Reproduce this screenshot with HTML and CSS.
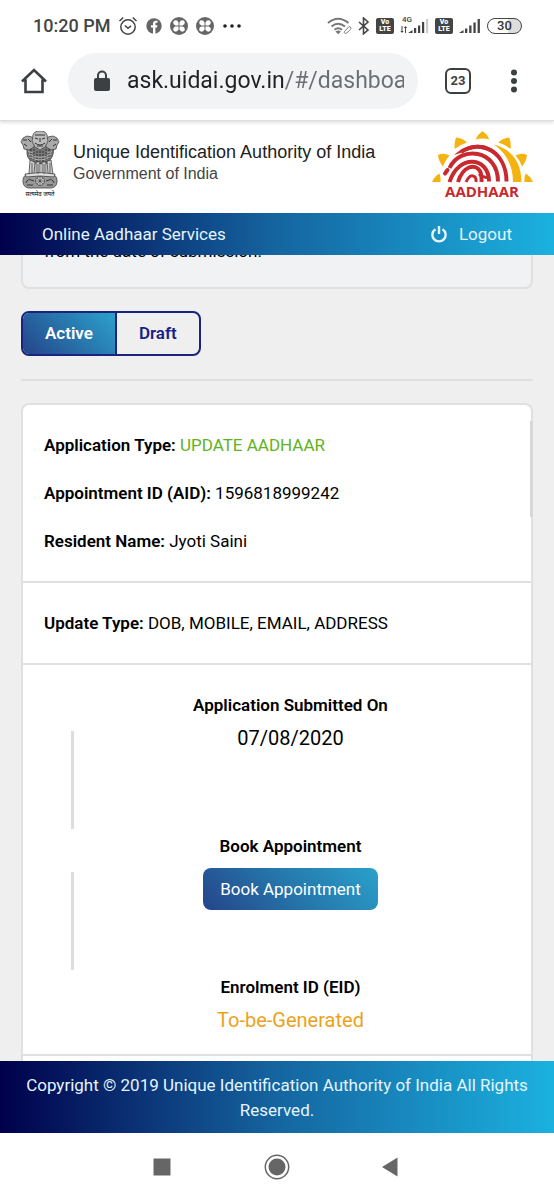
FILE: index.html
```
<!DOCTYPE html>
<html lang="en">
  <head>
    <meta charset="UTF-8" />
    <meta name="viewport" content="width=device-width, initial-scale=1.0" />
    <title>Online Aadhaar Services</title>
    <link rel="stylesheet" href="styles.css">
  </head>
  <body>
    <div class="status">
      <span class="clock">10:20 PM</span>
      <svg width="20" height="20" viewBox="0 0 20 20" fill="none" stroke="#444" stroke-width="1.5">
        <circle cx="10" cy="11" r="7.2" />
        <path d="M6.8 9.5 10 12.3l3-2.5M1.5 5 5.2 1.5M18.5 5l-3.7-3.5" />
      </svg>
      <svg width="16" height="16" viewBox="0 0 16 16">
        <circle cx="8" cy="8" r="7.7" fill="#666" />
        <path d="M7 16V9.5H5V7.2h2V5.6C7 3.7 8.2 2.7 9.8 2.7l1.7.1v2h-1c-.9 0-1.1.5-1.1 1.1v1.3h2l-.4 2.3H9.4V16z" fill="#fff" />
      </svg>
      <svg width="18" height="18" viewBox="0 0 19 19">
        <circle cx="9.5" cy="9.5" r="9.5" fill="#666" />
        <g fill="#fff">
          <path d="M9 9H5.500V5.500H9zM10 9h3.500V5.500H10zM9 10H5.500v3.500H9zM10 10h3.500v3.500H10z" />
          <circle cx="6" cy="6" r="2.600" />
          <circle cx="13" cy="6" r="2.600" />
          <circle cx="6" cy="13" r="2.600" />
          <circle cx="13" cy="13" r="2.600" />
        </g>
      </svg>
      <svg width="18" height="18" viewBox="0 0 19 19">
        <circle cx="9.5" cy="9.5" r="9.5" fill="#666" />
        <g fill="#fff">
          <path d="M9 9H5.500V5.500H9zM10 9h3.500V5.500H10zM9 10H5.500v3.500H9zM10 10h3.500v3.500H10z" />
          <circle cx="6" cy="6" r="2.600" />
          <circle cx="13" cy="6" r="2.600" />
          <circle cx="6" cy="13" r="2.600" />
          <circle cx="13" cy="13" r="2.600" />
        </g>
      </svg>
      <svg width="20" height="6" viewBox="0 0 20 6" fill="#222">
        <circle cx="3" cy="3" r="1.800" />
        <circle cx="10" cy="3" r="1.800" />
        <circle cx="17" cy="3" r="1.800" />
      </svg>
      <div class="signals">
        <svg width="25" height="18" viewBox="0 0 25 18" fill="none" stroke="#777" stroke-width="2">
          <path d="M1 6q10-8.500 20.500 0M4.500 9.500q6.500-5.500 13.500 0M7.500 12.800q3.700-3 7.500 0" />
          <path d="m8.500 14.500 2.700 2.700 2.700-2.700q-2.700-2-5.400 0z" fill="#777" stroke="none" />
          <path d="m17.500 14.500 4-4.500q1.500-1 2.300.4.600 1-.5 2.100l-3.500 3.500q-1.200 1-2.200 0-.800-.8-.1-1.500z" stroke-width="1" />
        </svg>
        <svg width="12" height="18" viewBox="0 0 12 18" fill="none" stroke="#444" stroke-width="1.600">
          <path d="m1 5 9 8-4.500 3.800V1L10 5l-9 8" />
        </svg>
        <span class="volte"><span>Vo</span><span>LTE</span></span>
        <div class="cell">
          <span class="net">4G</span>
          <svg width="29" height="17" viewBox="0 0 29 17" fill="#444">
            <path d="M1.500 9h1v5h1.200L2 16 .3 14h1.200zM5 16v-5H3.800L5.500 9l1.700 2H6v5zM8 16l4.500-3v3zM14 11h2.200v5H14zM18 8.500h2.200V16H18zM22 5h2.200v11H22z" />
            <path d="M26 2h2.200v14H26z" fill="#ccc" />
          </svg>
        </div>
        <span class="volte"><span>Vo</span><span>LTE</span></span>
        <svg width="22" height="17" viewBox="0 0 22 17" fill="#444">
          <path d="m0 16 4.500-3v3zM6 11.500h2.300V16H6zM10.200 8.500h2.300V16h-2.300zM14.400 5.500h2.300V16h-2.300zM18.600 2h2.300v14h-2.300z" />
        </svg>
        <span class="battery">30</span>
      </div>
    </div>

    <div class="browser">
      <button class="icon-btn" aria-label="Home">
        <svg width="28" height="28" viewBox="0 0 28 28" fill="none" stroke="#3c4043" stroke-width="2.600">
          <path d="M2 14.500 14 3l12 11.500M5.500 12.500V25h17V12.500" />
        </svg>
      </button>
      <div class="omnibox">
        <svg width="16" height="22" viewBox="0 0 16 22">
          <rect y="8" width="16" height="13" rx="2" fill="#3c4043" />
          <path d="M4 9V5.500a4 4 0 0 1 8 0V9" fill="none" stroke="#3c4043" stroke-width="2" />
        </svg>
        <input class="url" type="text" aria-label="Address" value="ask.uidai.gov.in/#/dashboard" />
      </div>
      <button class="tab-count" aria-label="Open tabs">23</button>
      <button class="icon-btn" aria-label="Menu">
        <svg width="8" height="24" viewBox="0 0 8 24" fill="#3c4043">
          <circle cx="4" cy="3.500" r="3" />
          <circle cx="4" cy="12" r="3" />
          <circle cx="4" cy="20.500" r="3" />
        </svg>
      </button>
    </div>

    <header class="brand">
      <div class="emblem">
        <svg width="40" height="58" viewBox="0 0 40 58">
          <g stroke="#444" stroke-width=".8">
            <path d="M8 12q-3 13 2 17l3 3 13 1 4-4q5-5 3-17l-8-5H14z" fill="#777" />
            <path d="M10 29 9 43h5l1-12zM16 31v13h4V31zM22 31v13h4V31zM27 30l1 13h5l-2-14z" fill="#ccc" />
            <path d="M1 11 3 7l4-2 5 1 3 5-1 5-5 3-5-1-1-4zM39 11l-2-4-4-2-5 1-3 5 1 5 5 3 5-1 1-4z" fill="#aaa" />
            <path d="M13 4q1-4 7-4t7 4l1 6-3 6-5 3-5-3-3-6z" fill="#bbb" />
            <rect x="3" y="43" width="34" height="14" rx="6" fill="#999" />
            <path d="M5 43q15-3 30 0l-1 3q-14-2-28 0z" fill="#ddd" />
            <circle cx="20" cy="50" r="4.500" fill="#ccc" />
          </g>
          <g fill="none" stroke="#333" stroke-width="1">
            <path d="M15 4h10M15 7l3 1M25 7l-3 1M20 7v4M15 12q5 4 10 0M17 15h6" />
            <path d="M3 9h4M4 13l3 2M8 8l3 3M37 9h-4M36 13l-3 2M32 8l-3 3" />
            <path d="M11 18v10M14 18v13M17 20v12M20 20v13M23 20v12M26 18v13M29 18v10" stroke-dasharray="2 1" />
            <path d="M8 20q3 3 5 1M27 21q3 2 5-1M10 26q10 6 20 0M9 23q11 7 22 0" stroke="#ccc" stroke-width=".7" />
            <path d="M12 32v10M18 33v10M24 33v10M30 32v10" stroke-width=".7" />
            <path d="M16 50h8M20 46v8M17 47l6 6M23 47l-6 6" stroke-width=".6" />
            <path d="M6 52q2-5 5-3l3 1M34 52q-2-5-5-3l-3 1M7 54h6M27 54h6" />
          </g>
        </svg>
        <span class="motto">सत्यमेव जयते</span>
      </div>
      <div class="titles">
        <div class="org">Unique Identification Authority of India</div>
        <div class="gov">Government of India</div>
      </div>
      <svg class="logo" width="102" height="70" viewBox="0 0 102 70">
        <g fill="#f5b30f">
          <path d="M50.500 0q4.500 3 7 8.500-7-2-14 0Q46 3 50.500 0zM24 6.500q6.500.5 11 5-7 2-12.300 6.500Q22 12 24 6.500zM77.300 6.500q-6.500.5-11 5 7 2 12.300 6.500.7-6-1.300-11.500zM6 24q5.500-2.500 11.500.5-4.500 5-6.500 11Q6.500 30 6 24zM95 24q-5.500-2.500-11.500.5 4.500 5 6.500 11Q94.500 30 95 24zM0 51q2.500-6 7.500-8.500Q9 47 8.500 51zM101 51q-2.500-6-7.500-8.500Q92 47 92.500 51z" />
          <path d="M62 13.500Q89 21 89.500 51H81Q81 27 62 13.500z" />
        </g>
        <g fill="none" stroke="#c8292e" stroke-width="4">
          <path d="M29 21C50 7 74.500 22 74.500 50.500" />
          <path d="M17.500 37C28 14 66 18 66 50.500" />
          <path d="M13 42.500l2.500-3.500" stroke-linecap="round" />
          <path d="M17.500 51C27 22 57 26 57 50.500" />
          <path d="M26 51c5-16 17-19 22-11q2 4 1.500 11" />
          <path d="M34 51q4-9 9-5 1.500 2 1 5M47 43q3 3 10 4" stroke-width="3" />
        </g>
        <path d="M22 24C38 10 54 12 64 21L44 17z" fill="#c8292e" />
        <text class="logo-text" x="50" y="66" text-anchor="middle">AADHAAR</text>
      </svg>
    </header>

    <nav class="topnav">
      <a href="#/dashboard">Online Aadhaar Services</a>
      <a class="logout" href="#/logout">
        <svg width="16" height="18" viewBox="0 0 16 18" fill="none" stroke="#e4f5ff" stroke-width="2.400">
          <path d="M4.500 4.200a6.600 6.600 0 1 0 7 0M8 1v8" />
        </svg>
        Logout
      </a>
    </nav>

    <main>
      <div class="notice">from the date of submission.</div>

      <div class="tabs">
        <button class="active">Active</button>
        <button>Draft</button>
      </div>

      <hr />

      <div class="card">
        <section class="details">
          <p><b>Application Type:</b> <span class="green">UPDATE AADHAAR</span></p>
          <p><b>Appointment ID (AID):</b> 1596818999242</p>
          <p><b>Resident Name:</b> Jyoti Saini</p>
        </section>
        <section class="details">
          <p><b>Update Type:</b> DOB, MOBILE, EMAIL, ADDRESS</p>
        </section>
        <section>
          <ol class="steps">
            <li>
              <b>Application Submitted On</b>
              <span class="value">07/08/2020</span>
            </li>
            <li>
              <b>Book Appointment</b>
              <button class="book">Book Appointment</button>
            </li>
            <li>
              <b>Enrolment ID (EID)</b>
              <span class="value pending">To-be-Generated</span>
            </li>
          </ol>
        </section>
        <section class="details"></section>
      </div>
    </main>

    <footer>Copyright © 2019 Unique Identification Authority of India All Rights Reserved.</footer>

    <div class="sysnav">
      <button class="icon-btn" aria-label="Recent apps">
        <svg width="26" height="26" viewBox="0 0 26 26"><path d="M4.500 4.500h17v17h-17z" fill="#666" /></svg>
      </button>
      <button class="icon-btn" aria-label="Home screen">
        <svg width="26" height="26" viewBox="0 0 26 26">
          <circle cx="13" cy="13" r="8.500" fill="#666" />
          <circle cx="13" cy="13" r="11.700" fill="none" stroke="#666" stroke-width="1.500" />
        </svg>
      </button>
      <button class="icon-btn" aria-label="Back">
        <svg width="26" height="26" viewBox="0 0 26 26"><path d="M3 13 18.500 3.500v19z" fill="#666" /></svg>
      </button>
    </div>
  </body>
</html>
```
FILE: styles.css
```
*,
*::before,
*::after {
  box-sizing: border-box;
}

body {
  display: flex;
  flex-direction: column;
  height: 100vh;
  margin: 0;
  background-color: #fff;
  color: #000;
  font-family: Roboto, "Noto Sans", sans-serif;
  font-size: 17px;
  line-height: 24px;
}

button {
  font: inherit;
  cursor: pointer;
}

a {
  color: inherit;
  text-decoration: none;
}

p {
  margin: 0;
}

b {
  font-weight: 600;
}

svg {
  display: block;
  flex-shrink: 0;
}

.icon-btn {
  padding: 0;
  border: 0;
  background: none;
}

/* phone status bar */
.status {
  display: flex;
  align-items: center;
  gap: 8px;
  height: 51px;
  padding: 0 32px 0 33px;
  flex-shrink: 0;
}

.clock {
  color: #444;
  font-size: 18px;
  font-weight: 500;
}

.signals {
  display: flex;
  align-items: center;
  gap: 6px;
  margin-left: auto;
}

.volte {
  display: flex;
  flex-direction: column;
  align-items: center;
  width: 18px;
  height: 16px;
  padding: 1px;
  border-radius: 2px;
  background-color: #444;
  color: #fff;
  font-size: 7px;
  font-weight: 900;
  line-height: 7px;
}

.cell {
  position: relative;
}

.net {
  position: absolute;
  top: -1px;
  left: 2px;
  color: #444;
  font-size: 8px;
  font-weight: 500;
  line-height: 8px;
}

.battery {
  width: 35px;
  border: 1px solid #444;
  border-radius: 8px;
  background: linear-gradient(to right, #fff 60%, #ddd 60%);
  color: #333;
  font-size: 13px;
  font-weight: 500;
  line-height: 14px;
  text-align: center;
}

/* browser toolbar */
.browser {
  display: flex;
  align-items: center;
  height: 70px;
  padding: 0 36px 10px 20px;
  border-bottom: 1px solid #ddd;
  background-color: #fff;
  box-shadow: 0 2px 3px rgba(0, 0, 0, 0.12);
  flex-shrink: 0;
  z-index: 1;
}

.omnibox {
  display: flex;
  flex: 1;
  align-items: center;
  gap: 17px;
  min-width: 0;
  height: 56px;
  margin: 0 27px 0 20px;
  padding: 0 14px 0 26px;
  border-radius: 28px;
  background-color: #f1f3f4;
}

.url {
  flex: 1;
  min-width: 0;
  padding: 0;
  border: 0;
  outline: 0;
  /* host is dark, the path after it is grey */
  background: linear-gradient(to right, #202124 157px, #6b6e73 157px);
  -webkit-background-clip: text;
  background-clip: text;
  color: #202124;
  -webkit-text-fill-color: transparent;
  font: 23px/32px Roboto, sans-serif;
}

.tab-count {
  width: 26px;
  height: 26px;
  margin-right: 39px;
  padding: 0;
  border: 2px solid #3c4043;
  border-radius: 6px;
  background: none;
  color: #3c4043;
  font-size: 13px;
  font-weight: 700;
  line-height: 20px;
}

/* site header */
.brand {
  display: flex;
  height: 92px;
  padding: 10px 20px 0;
  flex-shrink: 0;
}

.emblem {
  width: 40px;
}

.motto {
  display: block;
  font-size: 6px;
  line-height: 10px;
  text-align: center;
  white-space: nowrap;
}

.titles {
  flex: 1;
  padding: 9px 0 0 13px;
  font-family: "Liberation Sans", Arial, sans-serif;
}

.org {
  color: #222;
  font-size: 18px;
}

.gov {
  color: #444;
  font-size: 16px;
  line-height: 20px;
}

.logo-text {
  fill: #c8292e;
  font: 700 15px "Open Sans", sans-serif;
}

.topnav {
  display: flex;
  align-items: center;
  justify-content: space-between;
  height: 42px;
  padding: 0 42px;
  background: linear-gradient(to right, #00004b, #1565a0 50%, #1bb1df);
  color: #e4f5ff;
  flex-shrink: 0;
}

.logout {
  display: flex;
  align-items: center;
  gap: 12px;
}

main {
  flex: 1;
  min-height: 0;
  padding: 0 21px;
  overflow: hidden;
  background-color: #efefef;
}

.notice {
  margin-top: -42px;
  padding: 24px 21px;
  border: 2px solid #e0e0e0;
  border-radius: 8px;
  background-color: #f1f2f4;
}

.tabs {
  display: flex;
  width: fit-content;
  margin: 22px 0 23px;
  border: 2px solid #1a237e;
  border-radius: 8px;
  overflow: hidden;
}

.tabs button {
  padding: 8px 22px 9px;
  border: 0;
  background: none;
  color: #1a1f85;
  font-weight: 600;
}

.tabs .active {
  border-right: 2px solid #1a237e;
  background: linear-gradient(45deg, #25448a, #2ba1cb);
  color: #fff;
}

hr {
  height: 2px;
  margin: 0 0 22px;
  border: 0;
  background-color: #e0e0e0;
}

.card {
  position: relative;
  border: 2px solid #e0e0e0;
  border-radius: 8px;
  background-color: #fff;
}

/* scroll thumb on the card edge */
.card::after {
  content: "";
  position: absolute;
  top: 16px;
  right: -2px;
  width: 3px;
  height: 96px;
  background-color: #d8d8d8;
}

.card section + section {
  border-top: 2px solid #e0e0e0;
}

.details {
  display: grid;
  gap: 24px;
  padding: 28px 21px;
}

.green {
  color: #5fb320;
}

.steps {
  margin: 0;
  padding: 25px 21px 20px 48px;
  list-style: none;
}

.steps li {
  position: relative;
  display: flex;
  flex-direction: column;
  align-items: center;
  gap: 7px;
  height: 141px;
}

.steps li:last-child {
  height: 62px;
}

.steps li:not(:last-child)::before {
  content: "";
  position: absolute;
  top: 41px;
  left: 0;
  width: 3px;
  height: 98px;
  background-color: #ddd;
}

.steps b {
  line-height: 30px;
}

.value {
  font-size: 20px;
  line-height: 22px;
}

.pending {
  color: #eba31c;
}

.book {
  height: 42px;
  padding: 0 17px;
  border: 0;
  border-radius: 8px;
  background: linear-gradient(45deg, #25448a, #2576ab 50%, #2ba1cb);
  color: #fff;
}

footer {
  padding: 12px 20px 10px;
  background: linear-gradient(to right, #00004b, #1565a0 50%, #1bb1df);
  color: #e4f5ff;
  line-height: 25px;
  text-align: center;
  flex-shrink: 0;
}

.sysnav {
  display: flex;
  justify-content: center;
  gap: 89px;
  height: 67px;
  align-items: center;
  flex-shrink: 0;
}
```
